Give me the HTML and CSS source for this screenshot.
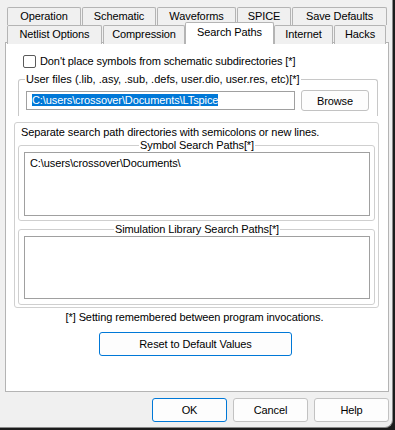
FILE: index.html
```html
<!DOCTYPE html>
<html lang="en">
<head>
    <meta charset="UTF-8">
    <title>Control Panel - Search Paths</title>
    <link rel="stylesheet" href="styles.css">
</head>
<body>
    <div class="window">
        <div class="tabs">
            <div class="tab-row">
                <div class="tab w-operation">Operation</div>
                <div class="tab w-schematic">Schematic</div>
                <div class="tab w-waveforms">Waveforms</div>
                <div class="tab w-spice">SPICE</div>
                <div class="tab w-save">Save Defaults</div>
            </div>
            <div class="tab-row front">
                <div class="tab w-netlist">Netlist Options</div>
                <div class="tab w-compression">Compression</div>
                <div class="tab active w-search">Search Paths</div>
                <div class="tab w-internet">Internet</div>
                <div class="tab w-hacks">Hacks</div>
            </div>
        </div>

        <div class="panel">
            <label class="check-row">
                <span class="checkbox"></span>
                Don't place symbols from schematic subdirectories [*]
            </label>

            <fieldset class="group user-files">
                <legend>User files (.lib, .asy, .sub, .defs, user.dio, user.res, etc)[*]</legend>
                <div class="file-row">
                    <div class="text-field"><span class="selected">C:\users\crossover\Documents\LTspice</span></div>
                    <button class="btn browse">Browse</button>
                </div>
            </fieldset>

            <div class="group paths">
                <div class="hint">Separate search path directories with semicolons or new lines.</div>

                <fieldset class="group sub symbol">
                    <legend>Symbol Search Paths[*]</legend>
                    <div class="text-area">C:\users\crossover\Documents\</div>
                </fieldset>

                <fieldset class="group sub library">
                    <legend>Simulation Library Search Paths[*]</legend>
                    <div class="text-area"></div>
                </fieldset>
            </div>

            <div class="note">[*] Setting remembered between program invocations.</div>

            <div class="reset-row">
                <button class="btn default reset">Reset to Default Values</button>
            </div>
        </div>

        <div class="dialog-buttons">
            <button class="btn default">OK</button>
            <button class="btn">Cancel</button>
            <button class="btn">Help</button>
        </div>
    </div>
</body>
</html>
```

FILE: styles.css
```css
body {
    margin: 0;
    background-color: #1c1c1c;
    font-family: "Liberation Sans", Arial, sans-serif;
    font-size: 11px;
    line-height: 13px;
    letter-spacing: -0.1px;
    color: #000;
}
.window {
    box-sizing: border-box;
    width: 393px;
    height: 428px;
    background-color: #f0f0f0;
    border-right: 1px solid #8a8a8a;
    border-bottom: 1px solid #8a8a8a;
    border-bottom-right-radius: 8px;
    padding-top: 7px;
    overflow: hidden;
}

/* tabs */
.tabs {
    padding-left: 7px;
}
.tab-row {
    display: flex;
    align-items: flex-end;
    height: 18px;
}
.tab {
    box-sizing: border-box;
    height: 18px;
    margin-right: 1px;
    border: 1px solid #b4b4b4;
    border-bottom: none;
    border-radius: 2px 2px 0 0;
    background-color: #f0f0f0;
    text-align: center;
    line-height: 17px;
    white-space: nowrap;
}
.tab-row.front .tab {
    height: 19px;
    margin-bottom: -1px;
}
.tab.active {
    position: relative;
    z-index: 1;
    margin-right: 0;
    background-color: #fff;
    line-height: 19px;
}
.tab-row.front .tab.active {
    height: 22px;
}
.w-operation { width: 74px; }
.w-schematic { width: 74px; }
.w-waveforms { width: 79px; }
.w-spice { width: 54px; }
.w-save { width: 95px; }
.w-netlist { width: 95px; }
.w-compression { width: 82px; margin-right: 0 !important; }
.w-search { width: 89px; }
.w-internet { width: 59px; }
.w-hacks { width: 52px; }

/* panel */
.panel {
    box-sizing: border-box;
    width: 384px;
    height: 350px;
    margin-left: 5px;
    margin-top: -1px;
    border: 1px solid #b4b4b4;
    background-color: #fff;
    padding-top: 12px;
}
.check-row {
    display: flex;
    align-items: center;
    gap: 4px;
    margin-left: 17px;
    height: 13px;
}
.checkbox {
    box-sizing: border-box;
    width: 13px;
    height: 13px;
    border: 1px solid #5a5a5a;
    border-radius: 2px;
    background-color: #fff;
}

.group {
    box-sizing: border-box;
    border: 1px solid #d5d5d5;
    border-radius: 3px;
    margin: 0;
    padding: 0;
    min-width: 0;
}
.group legend {
    padding: 0 1px;
    white-space: nowrap;
    overflow: hidden;
    line-height: 13px;
}
.user-files {
    width: 360px;
    margin: 5px 0 0 12px;
    padding: 4px 9px 5px 7px;
    border-bottom: none;
    border-bottom-left-radius: 0;
    border-bottom-right-radius: 0;
    border-color: #c8c8c8;
}
.user-files legend {
    margin-left: -1px;
    letter-spacing: 0;
}
.file-row {
    display: flex;
    align-items: center;
    justify-content: space-between;
    height: 21px;
}
.text-field {
    box-sizing: border-box;
    width: 269px;
    height: 19px;
    border: 1px solid #a0a0a0;
    padding: 2px 0 0 5px;
    white-space: nowrap;
    overflow: hidden;
}
.selected {
    background-color: #0078d7;
    color: #fff;
}
.btn {
    box-sizing: border-box;
    border: 1px solid #c2c2c2;
    border-radius: 3px;
    background-color: #fdfdfd;
    font-family: inherit;
    font-size: 11px;
    letter-spacing: inherit;
    color: #000;
    padding: 0;
}
.btn.default {
    border-color: #0078d7;
}
.browse {
    width: 68px;
    height: 21px;
    margin-right: -1px;
}

.paths {
    width: 365px;
    margin: 6px 0 0 8px;
    padding: 3px 3px 2px 3px;
    border-color: #d0d0d0;
}
.hint {
    padding-left: 3px;
    height: 13px;
}
.sub {
    width: 357px;
    padding: 0 4px 4px 5px;
    border-color: #cfcfcf;
}
.sub legend {
    margin: 0 auto;
}
.sub.library {
    margin-top: 2px;
    padding-bottom: 5px;
}
.text-area {
    box-sizing: border-box;
    width: 346px;
    height: 64px;
    border: 1px solid #a0a0a0;
    padding: 4px 5px;
}
.library .text-area {
    height: 63px;
}
.note {
    margin-top: 3px;
    height: 13px;
    text-align: center;
    padding-right: 5px;
}
.reset-row {
    margin-top: 8px;
    padding-left: 93px;
}
.reset {
    width: 193px;
    height: 24px;
}

.dialog-buttons {
    display: flex;
    justify-content: flex-end;
    gap: 6px;
    width: 389px;
    margin-top: 6px;
}
.dialog-buttons .btn {
    width: 75px;
    height: 24px;
}
```
